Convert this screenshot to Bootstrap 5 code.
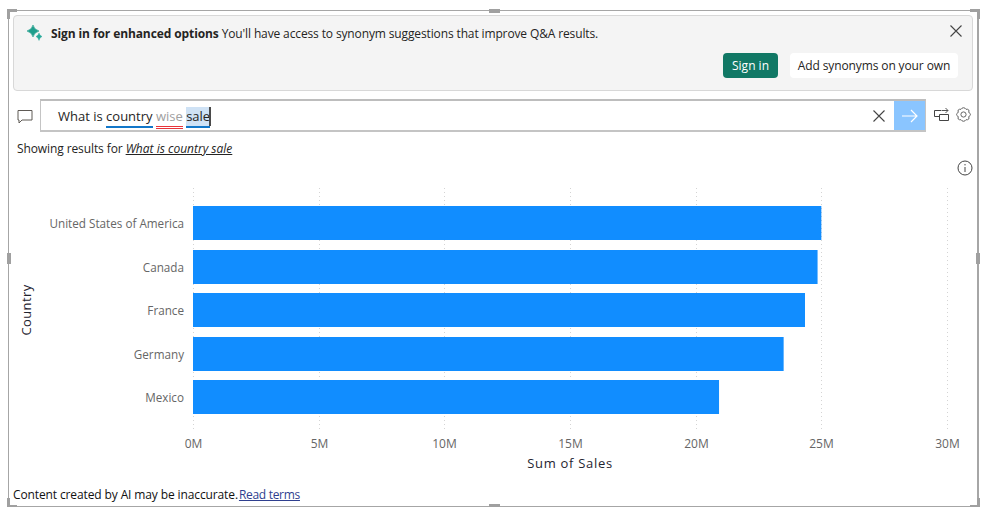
<!DOCTYPE html>
<html lang="en">
<head>
  <meta charset="UTF-8" />
  <meta name="viewport" content="width=device-width, initial-scale=1" />
  <title>Q&amp;A visual</title>
  <link href="https://cdn.jsdelivr.net/npm/bootstrap@5.3.0/dist/css/bootstrap.min.css" rel="stylesheet" />
  <style>
    body {
      background: #fff;
      color: #252423;
      font-family: "Open Sans", "Noto Sans", "Liberation Sans", sans-serif;
      font-size: 12px;
      overflow: hidden;
    }

    .visual-frame {
      position: relative;
      width: 971px;
      height: 497px;
      margin: 10px 0 0 8px;
      border: 1px solid #a6a6a6;
      border-width: 1px 2px 1px 1px;
      padding: 4px 4px 0;
    }

    .grip {
      position: absolute;
      background: #a0a0a0;
    }
    .grip-tl { left: -2px; top: -2px; width: 10px; height: 3px; }
    .grip-tl::after, .grip-tr::after, .grip-bl::after, .grip-br::after {
      content: "";
      position: absolute;
      width: 3px;
      height: 10px;
      background: #a0a0a0;
    }
    .grip-tr { right: -3px; top: -2px; width: 10px; height: 3px; }
    .grip-tr::after { right: 0; top: 0; }
    .grip-bl { left: -2px; bottom: -2px; width: 10px; height: 3px; }
    .grip-bl::after { left: 0; bottom: 0; }
    .grip-br { right: -3px; bottom: -2px; width: 10px; height: 3px; }
    .grip-br::after { right: 0; bottom: 0; }
    .grip-top { left: 480px; top: -2px; width: 11px; height: 4px; }
    .grip-bottom { left: 480px; bottom: -2px; width: 11px; height: 4px; }
    .grip-left { left: -2px; top: 242px; width: 4px; height: 11px; }
    .grip-right { right: -3px; top: 242px; width: 4px; height: 11px; }

    .signin-banner {
      height: 76px;
      width: 960px;
      background: #f4f4f4;
      border: 1px solid #d8d8d8;
      border-radius: 4px;
      padding: 9px 10px 0 12px;
    }
    .banner-text { letter-spacing: -.13px; }
    .banner-text b { letter-spacing: -.1px; }
    .banner-close {
      background: none;
      border: 0;
      padding: 0;
      line-height: 0;
    }
    .banner-actions { margin-top: 10px; }
    .btn-signin, .btn-synonyms {
      height: 25px;
      padding: 0;
      font-size: 12px;
      border-radius: 4px;
      border: 0;
      line-height: 25px;
    }
    .btn-signin { background: #117865; color: #fff; width: 55px; }
    .btn-synonyms { background: #fff; color: #252423; width: 168px; letter-spacing: -.12px; }

    .qa-row { margin-top: 8px; height: 33px; }
    .qa-chat { width: 27px; padding-left: 4px; }
    .qa-input {
      width: 886px;
      height: 33px;
      border: 1px solid #c4c4c4;
      border-top: 2px solid #bdbdbd;
      border-bottom: 2px solid #c4c4c4;
      background: #fff;
      font-size: 13px;
      padding-left: 17px;
    }
    .qa-text { margin-top: 2px; }
    .term { padding-bottom: 1px; }
    .term-known { border-bottom: 2px solid #1277c9; }
    .term-unknown {
      color: #a0a0a0;
      padding-bottom: 4px;
      background:
        linear-gradient(#e8343a, #e8343a) left bottom / 100% 1px no-repeat,
        linear-gradient(#e8343a, #e8343a) left calc(100% - 2px) / 100% 1px no-repeat;
    }
    .term-active { background: #cfe2f5; }
    .caret-line { display: inline-block; width: 2px; height: 19px; background: #4a4a4a; vertical-align: -5px; margin-left: -1px; }
    .qa-clear { margin-left: auto; margin-right: 9px; line-height: 0; }
    .qa-submit {
      width: 31px;
      height: 29px;
      background: #8ac5ff;
      border: 0;
      padding: 0;
      line-height: 0;
    }
    .qa-tools { margin-left: 8px; gap: 7px; margin-top: -3px; }

    .showing { margin: 8px 0 0 4px; line-height: 18px; letter-spacing: -.1px; }
    .showing a { color: #252423; font-style: italic; letter-spacing: 0; }

    .info-row { height: 20px; padding-top: 2px; }

    .chart-box { margin-left: -4px; margin-top: -1px; line-height: 0; }
    .chart-box text { font-family: "Open Sans", "Noto Sans", "Liberation Sans", sans-serif; }
    .cat-label { font-size: 11.7px; fill: #666; }
    .tick-label { font-size: 12px; fill: #666; }
    .axis-title { font-size: 13px; fill: #1f2430; font-weight: 500; letter-spacing: .7px; }
    .axis-title-y { letter-spacing: .4px; }
    .grid-line { stroke: #d4d4d4; stroke-dasharray: 1 3; }

    .footnote { position: absolute; left: 4px; bottom: 3px; color: #111; line-height: 16px; letter-spacing: -.12px; }
    .footnote a { color: #2f3f8f; margin-left: 1px; letter-spacing: -.3px; }
  </style>
</head>
<body>
  <div class="visual-frame">
    <span class="grip grip-tl"></span><span class="grip grip-tr"></span>
    <span class="grip grip-bl"></span><span class="grip grip-br"></span>
    <span class="grip grip-top"></span><span class="grip grip-bottom"></span>
    <span class="grip grip-left"></span><span class="grip grip-right"></span>

    <!-- banner -->
    <div class="signin-banner">
      <div class="d-flex align-items-start">
        <svg width="17" height="17" viewBox="0 0 17 17" class="me-2 flex-shrink-0">
          <path d="M7 0 Q8 4.5 13 6 Q8 7.5 7 12 Q6 7.5 1 6 Q6 4.5 7 0 Z" fill="#1f9e8c" stroke="#1f9e8c" stroke-width=".6" />
          <path d="M13 8 Q13.6 10.6 16 11.5 Q13.6 12.4 13 15.5 Q12.4 12.4 10 11.5 Q12.4 10.6 13 8 Z" fill="#28a99a" stroke="#28a99a" stroke-width=".4" />
        </svg>
        <div class="banner-text"><b class="fw-bold">Sign in for enhanced options</b> You'll have access to synonym suggestions that improve Q&amp;A results.</div>
        <button class="banner-close ms-auto" aria-label="Close">
          <svg width="12" height="12" viewBox="0 0 12 12"><path d="M.5 .5 L11.5 11.5 M11.5 .5 L.5 11.5" stroke="#444" stroke-width="1.1" /></svg>
        </button>
      </div>
      <div class="banner-actions d-flex justify-content-end gap-2 pe-1">
        <button class="btn-signin me-1">Sign in</button>
        <button class="btn-synonyms">Add synonyms on your own</button>
      </div>
    </div>

    <!-- question box -->
    <div class="qa-row d-flex align-items-center">
      <div class="qa-chat">
        <svg width="16" height="15" viewBox="0 0 16 15"><path d="M1 1.5 H15 V11 H5 L2 14 V11 H1 Z" fill="none" stroke="#5f5a55" /></svg>
      </div>
      <div class="qa-input d-flex align-items-center">
        <span class="qa-text">What is <span class="term term-known">country</span> <span class="term term-unknown">wise</span> <span class="term term-known term-active">sale</span><span class="caret-line"></span></span>
        <span class="qa-clear">
          <svg width="12" height="12" viewBox="0 0 12 12"><path d="M.5 .5 L11.5 11.5 M11.5 .5 L.5 11.5" stroke="#444" stroke-width="1.1" /></svg>
        </span>
        <button class="qa-submit" aria-label="Submit">
          <svg width="16" height="14" viewBox="0 0 16 14"><path d="M0 7 H15 M9 1 L15 7 L9 13" fill="none" stroke="#fff" stroke-width="1.2" /></svg>
        </button>
      </div>
      <div class="qa-tools d-flex align-items-center">
        <svg width="15" height="14" viewBox="0 0 15 14" fill="none" stroke="#444">
          <path d="M5.5 9.5 H.5 V3.5 H7" />
          <path d="M5.5 7.5 H14.5 V13.5 H5.5 Z" />
          <path d="M7.5 3.5 H14 M11.5 1 L14 3.5 L11.5 6" stroke="#555" />
        </svg>
        <svg width="15" height="15" viewBox="0 0 15 15" fill="none" stroke="#666">
          <circle cx="7.5" cy="7.5" r="2.6" />
          <path d="M6 1.2 Q7.5 .2 9 1.2 L10 2.3 Q11.7 1.9 12.7 2.9 Q13.3 4 12.7 5 L13.3 6 Q14.6 6.5 14.4 7.5 Q14.6 8.5 13.3 9 L12.7 10 Q13.3 11 12.7 12.1 Q11.7 13.1 10 12.7 L9 13.8 Q7.5 14.8 6 13.8 L5 12.7 Q3.3 13.1 2.3 12.1 Q1.7 11 2.3 10 L1.7 9 Q.4 8.5 .6 7.5 Q.4 6.5 1.7 6 L2.3 5 Q1.7 4 2.3 2.9 Q3.3 1.9 5 2.3 Z" />
        </svg>
      </div>
    </div>

    <div class="showing">Showing results for <a href="#">What is country sale</a></div>

    <div class="info-row d-flex justify-content-end">
      <svg width="16" height="16" viewBox="0 0 16 16" fill="none" stroke="#444">
        <circle cx="8" cy="8" r="7" />
        <path d="M8 7 V12 M8 4 V5.4" />
      </svg>
    </div>

    <!-- chart drawn from the data below -->
    <div class="chart-box">
      <svg id="chart" width="968" height="310" viewBox="9 177 968 310"></svg>
    </div>

    <div class="footnote">Content created by AI may be inaccurate.<a href="#">Read terms</a></div>
  </div>

  <script>
    const sales = [
      ['United States of America', 25.0, 206],
      ['Canada', 24.85, 250],
      ['France', 24.35, 293],
      ['Germany', 23.5, 337],
      ['Mexico', 20.93, 380]
    ];
    const x0 = 193, perM = 754 / 30;
    let out = '';

    for (let m = 0; m <= 30; m += 5) {
      const x = Math.round(x0 + m * perM) + .5;
      out += `<line class="grid-line" x1="${x}" x2="${x}" y1="188" y2="432"></line>`;
      out += `<text class="tick-label" x="${x}" y="448" text-anchor="middle">${m}M</text>`;
    }

    sales.forEach(([name, val, y]) => {
      out += `<rect x="${x0}" y="${y}" width="${val * perM}" height="34" fill="#118dff"></rect>`;
      out += `<text class="cat-label" x="184" y="${y + 22}" text-anchor="end">${name}</text>`;
    });

    out += `<text class="axis-title" x="570" y="468" text-anchor="middle">Sum of Sales</text>`;
    out += `<text class="axis-title axis-title-y" x="31" y="310" text-anchor="middle" transform="rotate(-90 31 310)">Country</text>`;
    document.getElementById('chart').innerHTML = out;
  </script>
  <script src="https://cdn.jsdelivr.net/npm/bootstrap@5.3.0/dist/js/bootstrap.bundle.min.js"></script>
</body>
</html>
